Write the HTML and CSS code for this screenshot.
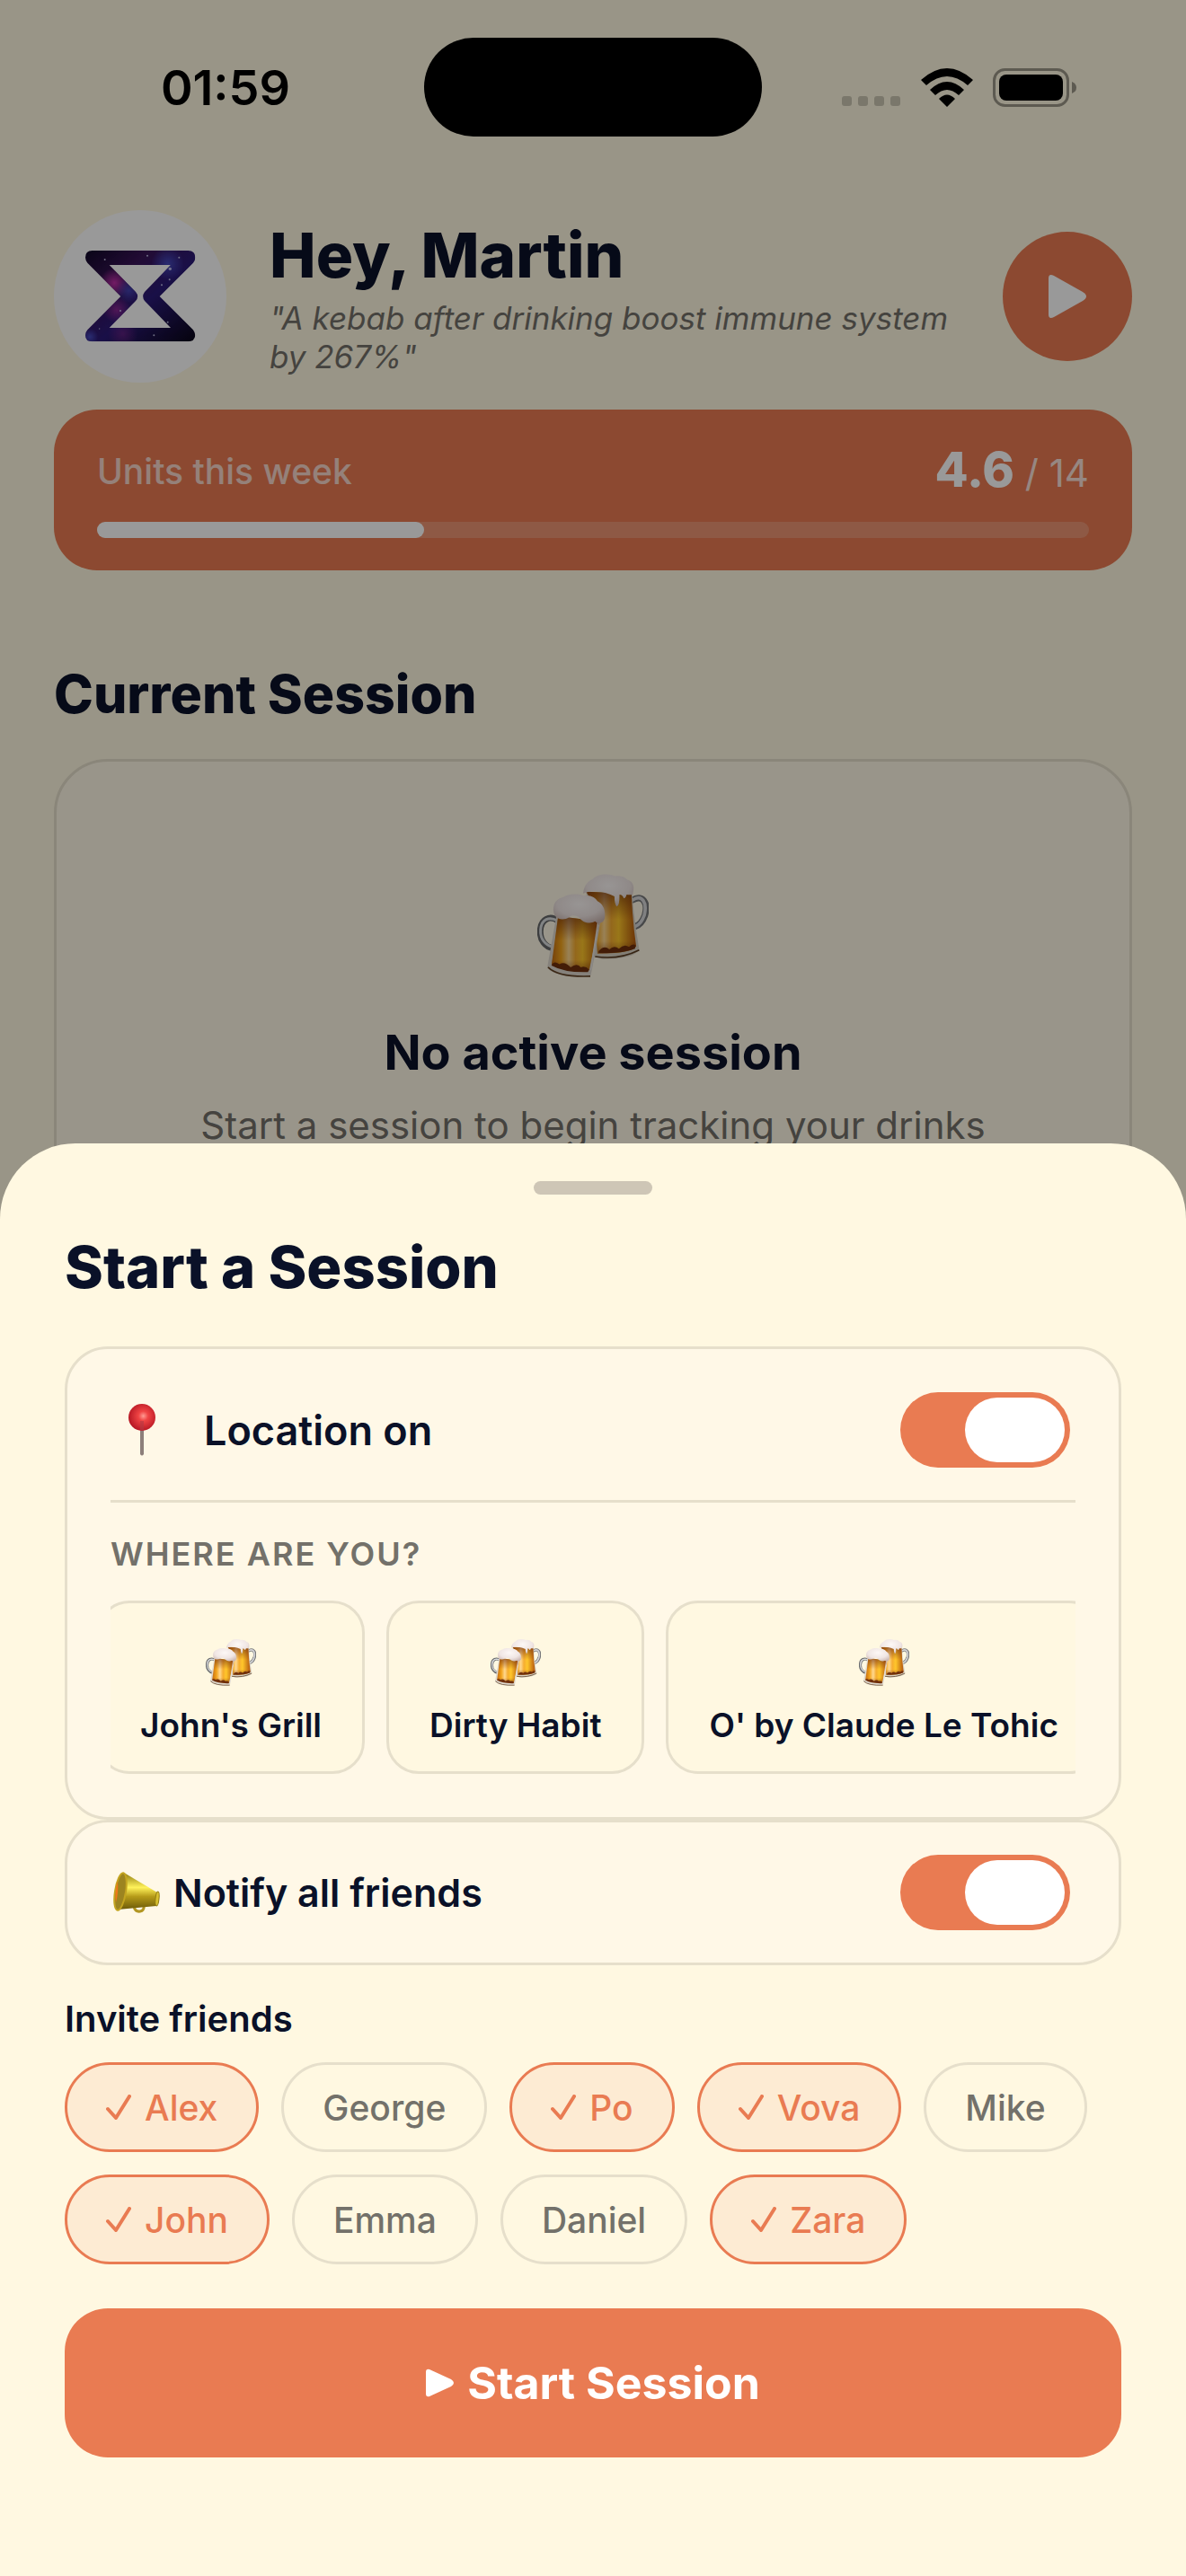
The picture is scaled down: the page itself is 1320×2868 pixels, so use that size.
FILE: index.html
```html
<!DOCTYPE html>
<html lang="en">
<head>
<meta charset="utf-8">
<meta name="viewport" content="width=device-width, initial-scale=1">
<title>Start a Session</title>
<link rel="stylesheet" href="styles.css">
</head>
<body>
<svg class="sprite" aria-hidden="true">
  <defs>
    <linearGradient id="beer" x1="0" x2="1" y1="0" y2="0">
      <stop offset="0" stop-color="#c46c10"/>
      <stop offset=".2" stop-color="#f3a41c"/>
      <stop offset=".36" stop-color="#ffd890"/>
      <stop offset=".5" stop-color="#f6ad30"/>
      <stop offset=".65" stop-color="#ffc62a"/>
      <stop offset="1" stop-color="#b3560c"/>
    </linearGradient>
    <linearGradient id="beer-shade" x1="0" x2="0" y1="0" y2="1">
      <stop offset="0" stop-color="#6e2a0c" stop-opacity=".65"/>
      <stop offset=".45" stop-color="#6e2a0c" stop-opacity="0"/>
      <stop offset=".8" stop-color="#6e2a0c" stop-opacity="0"/>
      <stop offset="1" stop-color="#6e2a0c" stop-opacity=".5"/>
    </linearGradient>
    <radialGradient id="foam" cx=".5" cy=".35" r=".7">
      <stop offset="0" stop-color="#fdf8f6"/>
      <stop offset=".6" stop-color="#f0e6e4"/>
      <stop offset="1" stop-color="#cdb9b4"/>
    </radialGradient>
    <symbol id="mugs" viewBox="110 99 374 349">
      <path d="M430 186C462 166 484 194 471 238Q460 268 440 274" fill="none" stroke="#77787a" stroke-width="22" stroke-linecap="round"/>
      <path d="M430 186C462 166 480 194 469 238Q458 268 440 274" fill="none" stroke="#d5d6d8" stroke-width="11" stroke-linecap="round"/>
      <path d="M274 158L428 164Q436 260 452 352Q440 382 330 385L300 376Z" fill="#d9d2c4"/>
      <path d="M304 376Q384 388 452 354" fill="none" stroke="#5a3c20" stroke-width="5"/>
      <path d="M274 158L426 164Q430 260 442 342L430 352Q400 366 312 366L300 200Z" fill="url(#beer)"/>
      <path d="M274 158L426 164Q430 260 442 342L430 352Q400 366 312 366L300 200Z" fill="url(#beer-shade)"/>
      <path d="M316 358Q334 336 352 352Q368 336 384 350Q402 332 418 344Q430 330 440 338L438 350Q390 368 316 364Z" fill="#70300c"/>
      <path d="M264 162C268 132 284 122 296 116C310 98 350 96 372 106C394 104 406 112 412 118C432 124 438 140 430 168Q420 170 410 168Q406 182 400 180Q396 168 386 168Q386 206 377 208Q369 200 369 174Q342 160 318 158Q290 154 264 164Z" fill="url(#foam)"/>
      <path d="M176 254C148 234 118 248 116 286C114 320 134 342 158 346" fill="none" stroke="#66686a" stroke-width="21" stroke-linecap="round" transform="translate(4 2)"/>
      <path d="M178 256C150 240 124 250 121 286C119 318 138 338 160 343" fill="none" stroke="#d8dadd" stroke-width="9" stroke-linecap="round"/>
      <path d="M174 240L322 258Q308 350 290 438Q280 450 200 440Q150 430 144 410Z" fill="#ded8ce"/>
      <path d="M146 412Q180 446 288 442" fill="none" stroke="#644426" stroke-width="5"/>
      <path d="M180 240L318 258Q300 350 284 422Q220 430 158 402Z" fill="url(#beer)"/>
      <path d="M180 240L318 258Q300 350 284 422Q220 430 158 402Z" fill="url(#beer-shade)"/>
      <path d="M158 404Q166 388 184 402Q202 390 222 412Q244 396 256 412Q272 406 284 420L280 428Q200 430 158 406Z" fill="#70300c"/>
      <path d="M314 262L290 420" stroke="#e9e5e0" stroke-width="5" fill="none"/>
      <path d="M164 218C164 192 180 180 198 176C216 164 250 164 266 172C290 168 306 180 312 190C332 200 340 222 336 248C332 266 312 268 304 258C288 268 262 262 252 246C240 236 226 236 216 244C204 254 178 252 172 242Q164 234 164 218Z" fill="url(#foam)"/>
    </symbol>
    <symbol id="play" viewBox="0 0 42 48">
      <path d="M0 4Q0 -2 6 1L38 19Q46 24 38 29L6 47Q0 50 0 44Z" fill="currentColor"/>
    </symbol>
    <symbol id="tick" viewBox="0 0 28 28">
      <path d="M2 16L11 26L26 2" fill="none" stroke="currentColor" stroke-width="4" stroke-linecap="round" stroke-linejoin="round"/>
    </symbol>
  </defs>
</svg>

<div class="app">
  <div class="home">
    <div class="status">
      <div class="status-time">01:59</div>
      <div class="island"></div>
      <div class="status-icons">
        <svg width="66" height="43" viewBox="0 0 66 43" fill="#7a776b"><rect y="31" width="11" height="11" rx="3"/><rect x="18" y="31" width="11" height="11" rx="3"/><rect x="36" y="31" width="11" height="11" rx="3"/><rect x="54" y="31" width="11" height="11" rx="3"/></svg>
        <svg width="58" height="43" viewBox="0 0 58 43"><path d="M0 13Q29 -13 58 13L52 19Q29 -1 6 19ZM10 24Q29 6 48 24L42 30Q29 18 16 30ZM20 34Q29 25 38 34L29 43Z"/></svg>
        <svg width="94" height="43" viewBox="0 0 94 43"><rect x="1.500" y="1.500" width="82" height="40" rx="12" fill="none" stroke="#5d5a51" stroke-width="3"/><rect x="7" y="7" width="71" height="29" rx="8"/><path d="M88 15Q93 17 93 21.500T88 28Z" fill="#5d5a51"/></svg>
      </div>
    </div>

    <main class="home-body">
      <header class="greeting">
        <svg class="avatar" viewBox="60 72 576 576" role="img" aria-label="Profile picture">
          <defs>
            <linearGradient id="space" x1="0" y1="0" x2="1" y2="1">
              <stop offset="0" stop-color="#0d0724"/><stop offset=".3" stop-color="#3a1458"/>
              <stop offset=".55" stop-color="#2b1a78"/><stop offset=".8" stop-color="#170e3e"/><stop offset="1" stop-color="#070411"/>
            </linearGradient>
            <radialGradient id="pink"><stop offset="0" stop-color="#c030a8"/><stop offset="1" stop-color="#c030a8" stop-opacity="0"/></radialGradient>
            <radialGradient id="blue"><stop offset="0" stop-color="#4a55d0"/><stop offset="1" stop-color="#4a55d0" stop-opacity="0"/></radialGradient>
            <clipPath id="glass"><path clip-rule="evenodd" d="M188 207H508Q532 207 532 230Q532 240 525 248L413 360L525 472Q532 482 532 490Q530 511 508 511H188Q165 511 165 490Q165 480 172 472L283 360L172 248Q165 238 165 230Q165 207 188 207ZM245 255L333 345Q346 360 333 375L245 465H450L363 375Q352 360 363 345L450 255Z"/></clipPath>
          </defs>
          <circle cx="348" cy="360" r="288" fill="#fff"/>
          <g clip-path="url(#glass)">
            <rect x="160" y="200" width="380" height="320" fill="url(#space)"/>
            <circle cx="262" cy="315" r="50" fill="url(#pink)"/>
            <circle cx="270" cy="405" r="45" fill="url(#pink)" opacity=".6"/>
            <circle cx="290" cy="485" r="50" fill="url(#pink)" opacity=".35"/>
            <circle cx="310" cy="340" r="42" fill="url(#blue)" opacity=".7"/>
            <circle cx="440" cy="250" r="55" fill="url(#blue)" opacity=".8"/>
            <circle cx="180" cy="495" r="28" fill="url(#blue)" opacity=".8"/>
            <g fill="#dfe2ff" opacity=".8"><circle cx="230" cy="237" r="3"/><circle cx="372" cy="224" r="3"/><circle cx="448" cy="268" r="5"/><circle cx="478" cy="230" r="3"/><circle cx="446" cy="304" r="3"/><circle cx="420" cy="322" r="3"/><circle cx="282" cy="408" r="3"/><circle cx="394" cy="490" r="3"/><circle cx="440" cy="446" r="3"/><circle cx="212" cy="468" r="2"/></g>
          </g>
        </svg>
        <div class="greeting-text">
          <h1>Hey, Martin</h1>
          <p>"A kebab after drinking boost immune system by 267%"</p>
        </div>
        <button class="play" type="button" aria-label="Start"><svg width="42" height="48"><use href="#play"/></svg></button>
      </header>

      <section class="units">
        <div class="units-row">
          <span class="units-label">Units this week</span>
          <span class="units-value"><strong>4.6</strong> / 14</span>
        </div>
        <div class="bar"><div class="bar-fill" style="width:33%"></div></div>
      </section>

      <h2>Current Session</h2>
      <section class="empty">
        <svg width="124" height="116"><use href="#mugs"/></svg>
        <h3>No active session</h3>
        <p>Start a session to begin tracking your drinks</p>
      </section>
    </main>
    <div class="scrim"></div>
  </div>

  <section class="sheet" role="dialog" aria-labelledby="sheet-title">
    <div class="handle"></div>
    <h2 class="sheet-title" id="sheet-title">Start a Session</h2>

    <div class="card card-location">
      <div class="row">
        <span class="pin"><svg width="30" height="58" viewBox="0 0 30 58">
          <defs><radialGradient id="ball" cx=".55" cy=".45" r=".6"><stop offset="0" stop-color="#ff9a92"/><stop offset=".3" stop-color="#f04444"/><stop offset="1" stop-color="#b01220"/></radialGradient></defs>
          <path d="M13 28H17V56Q15 59 13 56Z" fill="#8d7f7b"/><circle cx="15" cy="15" r="15" fill="url(#ball)"/><path d="M13 19H17V30H13Z" fill="#b23a44" opacity=".6"/>
        </svg></span>
        <label class="row-label" for="location">Location on</label>
        <input class="switch" id="location" type="checkbox" role="switch" checked>
      </div>
      <hr>
      <h3 class="overline">Where are you?</h3>
      <div class="places">
        <div class="places-track">
          <button class="place" type="button"><svg width="56" height="54"><use href="#mugs"/></svg>John's Grill</button>
          <button class="place" type="button"><svg width="56" height="54"><use href="#mugs"/></svg>Dirty Habit</button>
          <button class="place" type="button"><svg width="56" height="54"><use href="#mugs"/></svg>O' by Claude Le Tohic</button>
        </div>
      </div>
    </div>

    <div class="card card-notify">
      <div class="row">
        <svg class="horn" width="56" height="46" viewBox="0 0 56 46">
          <defs><linearGradient id="brass" x1="0" y1="0" x2="0" y2="1"><stop offset="0" stop-color="#8f7a10"/><stop offset=".4" stop-color="#fff25a"/><stop offset=".65" stop-color="#b59a18"/><stop offset="1" stop-color="#6c5a0a"/></linearGradient></defs>
          <path d="M26 38Q27 45 33 44Q38 43 37 37" fill="none" stroke="#b29622" stroke-width="3"/>
          <path d="M15 1L52 23Q56 31 51 38L8 42Z" fill="url(#brass)"/>
          <ellipse cx="11" cy="22" rx="6" ry="21" transform="rotate(9 11 22)" fill="#9c8420" stroke="#c3a420" stroke-width="2"/>
          <path d="M8 10Q4 24 6 34Q9 24 8 10Z" fill="#f07818"/>
          <ellipse cx="52" cy="30" rx="2" ry="8" transform="rotate(6 52 30)" fill="#d8c030" stroke="#8f7a10"/>
        </svg>
        <label class="row-label" for="notify">Notify all friends</label>
        <input class="switch" id="notify" type="checkbox" role="switch" checked>
      </div>
    </div>

    <h3 class="invite">Invite friends</h3>
    <div class="chips">
      <button class="chip" type="button" aria-pressed="true"><svg width="28" height="28"><use href="#tick"/></svg>Alex</button>
      <button class="chip" type="button" aria-pressed="false">George</button>
      <button class="chip" type="button" aria-pressed="true"><svg width="28" height="28"><use href="#tick"/></svg>Po</button>
      <button class="chip" type="button" aria-pressed="true"><svg width="28" height="28"><use href="#tick"/></svg>Vova</button>
      <button class="chip" type="button" aria-pressed="false">Mike</button>
      <button class="chip" type="button" aria-pressed="true"><svg width="28" height="28"><use href="#tick"/></svg>John</button>
      <button class="chip" type="button" aria-pressed="false">Emma</button>
      <button class="chip" type="button" aria-pressed="false">Daniel</button>
      <button class="chip" type="button" aria-pressed="true"><svg width="28" height="28"><use href="#tick"/></svg>Zara</button>
    </div>

    <button class="start" type="button"><svg width="32" height="32" viewBox="0 0 32 32"><path d="M0 4Q0 0 4 1L28 12Q34 16 28 20L4 31Q0 32 0 28Z" fill="currentColor"/></svg>Start Session</button>
  </section>
</div>
</body>
</html>
```
FILE: styles.css
```css
:root {
  --cream: #fff8e1;
  --card: #fff8e7;
  --orange: #e97b52;
  --navy: #0a1128;
  --muted: #73716a;
  --line: #e6dfcb;
}

* { box-sizing: border-box; }

body {
  margin: 0;
  background: var(--cream);
  color: var(--navy);
  font-family: Inter, "Liberation Sans", sans-serif;
  font-size: 39px;
}

h1, h2, h3, p { margin: 0; }

button {
  border: 0;
  padding: 0;
  font: inherit;
  color: inherit;
  cursor: pointer;
}

svg { display: block; flex: none; }
.sprite { position: absolute; width: 0; height: 0; }

.app {
  position: relative;
  min-height: 100vh;
  overflow: hidden;
}

/* Status bar */
.status {
  position: relative;
  z-index: 1;
  display: grid;
  grid-template-columns: 1fr 376px 1fr;
  align-items: center;
  padding-top: 42px;
  color: #000;
}
.status-time {
  padding-left: 30px;
  text-align: center;
  font-size: 54px;
  font-weight: 600;
}
.island { height: 110px; border-radius: 55px; background: #000; }
.status-icons {
  display: flex;
  justify-content: center;
  gap: 22px;
  padding-right: 32px;
}

/* Home screen */
.home-body { padding: 82px 60px 0; }
.greeting { display: flex; align-items: center; gap: 48px; }
.avatar { width: 192px; height: 192px; }
.greeting-text { flex: 1; min-width: 0; }
.greeting h1 { font-size: 69px; line-height: 86px; font-weight: 800; }
.greeting p {
  margin-top: 6px;
  color: var(--muted);
  font-size: 35px;
  line-height: 43px;
  font-style: italic;
}
.play {
  display: flex;
  align-items: center;
  justify-content: center;
  width: 144px;
  height: 144px;
  border-radius: 50%;
  background: var(--orange);
  color: #fff;
}

.units {
  margin-top: 30px;
  padding: 36px 48px;
  border-radius: 48px;
  background: var(--orange);
  color: #fff;
}
.units-row {
  display: flex;
  align-items: center;
  justify-content: space-between;
  height: 65px;
}
.units-label { font-weight: 500; opacity: .7; }
.units-value { color: #fffc; font-size: 42px; line-height: 65px; }
.units-value strong { color: #fff; font-size: 54px; font-weight: 800; }
.bar { height: 18px; margin-top: 24px; border-radius: 9px; background: #ffffff33; }
.bar-fill { height: 18px; border-radius: 9px; background: #fff; }

.home h2 {
  margin: 102px 0 36px;
  font-size: 59px;
  line-height: 72px;
  font-weight: 800;
}
.empty {
  display: flex;
  flex-direction: column;
  align-items: center;
  padding: 125px 48px;
  border: 3px solid var(--line);
  border-radius: 60px;
  background: var(--card);
  text-align: center;
}
.empty h3 { margin: 51px 0 24px; font-size: 54px; line-height: 64px; font-weight: 700; }
.empty p { color: var(--muted); font-size: 42px; line-height: 50px; }

.scrim { position: absolute; inset: 0; background: rgba(0, 0, 0, .4); }

/* Bottom sheet */
.sheet {
  position: absolute;
  left: 0;
  right: 0;
  bottom: 0;
  padding: 42px 72px 132px;
  border-radius: 84px 84px 0 0;
  background: var(--cream);
}
.handle { width: 132px; height: 15px; margin: 0 auto 41px; border-radius: 8px; background: #cec6b6; }
.sheet-title { margin-bottom: 48px; font-size: 65px; line-height: 80px; font-weight: 800; }

.card {
  padding: 36px 48px;
  border: 3px solid var(--line);
  border-radius: 48px;
  background: var(--card);
}
.card-location { padding: 48px; }
.row { display: flex; align-items: center; }
.row-label { flex: 1; font-size: 43px; font-weight: 600; }
.card-location .row-label { font-size: 45px; }
.pin { display: flex; justify-content: center; width: 70px; margin-right: 34px; }
.horn { margin-right: 14px; }

.switch {
  appearance: none;
  width: 189px;
  height: 84px;
  margin: 0 6px 0 0;
  padding: 6px;
  border-radius: 42px;
  background: #d9d3c0;
  cursor: pointer;
}
.switch::before {
  content: "";
  display: block;
  width: 111px;
  height: 72px;
  border-radius: 36px;
  background: #fff;
}
.switch:checked { background: var(--orange); }
.switch:checked::before { margin-left: auto; }

hr { height: 3px; margin: 36px 0; border: 0; background: var(--line); }
.overline {
  margin-bottom: 30px;
  color: var(--muted);
  font-size: 36px;
  line-height: 43px;
  font-weight: 600;
  letter-spacing: 2px;
  text-transform: uppercase;
}

/* Horizontal list of places, scrolled slightly past its start */
.places { overflow: hidden; }
.places-track { display: flex; gap: 24px; margin-left: -15px; }
.place {
  display: flex;
  flex: none;
  flex-direction: column;
  align-items: center;
  padding: 30px 45px;
  border: 3px solid var(--line);
  border-radius: 36px;
  background: var(--cream);
  font-size: 37px;
  line-height: 43px;
  font-weight: 600;
}
.place svg { margin: 9px 0 21px; }

.invite { margin: 36px 0 24px; font-size: 40px; line-height: 48px; font-weight: 600; }
.chips { display: flex; flex-wrap: wrap; gap: 25px; }
.chip {
  display: flex;
  align-items: center;
  gap: 15px;
  height: 100px;
  padding: 0 43px;
  border: 3px solid var(--line);
  border-radius: 50px;
  background: transparent;
  color: var(--muted);
  font-weight: 500;
}
.chip[aria-pressed="true"] {
  border-color: var(--orange);
  background: #fdebd3;
  color: var(--orange);
}

.start {
  display: flex;
  align-items: center;
  justify-content: center;
  gap: 14px;
  width: 100%;
  height: 166px;
  margin-top: 49px;
  border-radius: 48px;
  background: var(--orange);
  color: #fff;
  font-size: 50px;
  font-weight: 700;
}
```
